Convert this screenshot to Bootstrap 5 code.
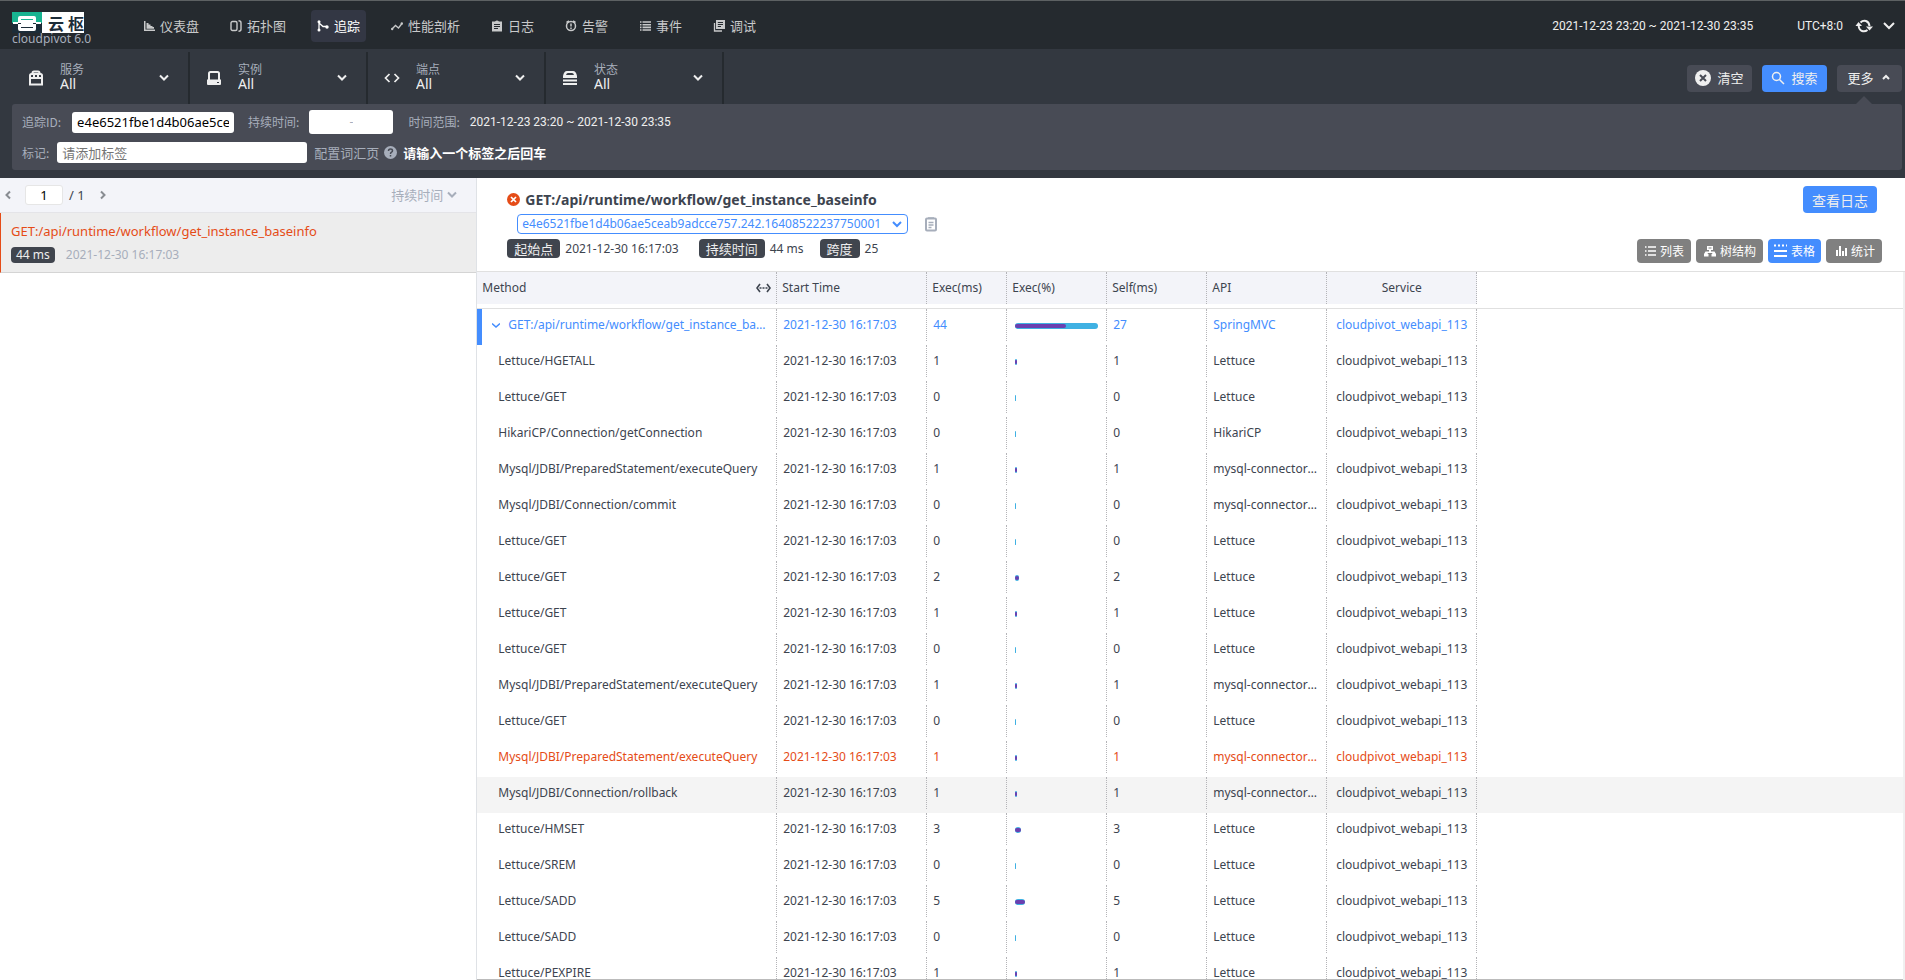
<!DOCTYPE html>
<html lang="zh-CN">
<head>
<meta charset="utf-8">
<meta name="viewport" content="width=device-width, initial-scale=1">
<title>cloudpivot 6.0</title>
<link href="https://cdn.jsdelivr.net/npm/bootstrap@5.3.0/dist/css/bootstrap.min.css" rel="stylesheet">
<style>
  :root { --ink:#3d444f; --dim:#a7aebb; --blue:#448dfe; --red:#e54c17; --bar:#333840; --dark:#252a2f; --panel:#484b55; --pale:#f3f4f9; }
  body { font-family:"Noto Sans","Noto Sans CJK SC",sans-serif; font-size:12px; line-height:16px; color:var(--ink); background:#fff; }
  svg { display:block; flex:none; fill:none; stroke:currentColor; }
  svg .f { fill:currentColor; stroke:none; }
  button, select, input { font:inherit; color:inherit; }
  select { appearance:none; border:0; background:transparent; padding:0; }
  input { border:0; border-radius:3px; background:#fff; color:#000; min-width:0; }
  .cjk { font-family:"Noto Sans CJK SC",sans-serif; }
  .t13 { font-size:13px; }
  .dates { font-family:Roboto,sans-serif; color:#efefef; }
  .dim { color:var(--dim); }
  .topbar { height:49px; background:var(--dark); border-top:1px solid #5d6163; padding:2px 9px 0 12px; }
  .brand { width:125px; padding-top:9px; }
  .brand-img { width:72px; height:21px; background:linear-gradient(#18b491 52%,#1c2c38 52%) left/30px 100% no-repeat #fff; }
  .brand-img b { font-size:16px; line-height:22px; color:#1c2c38; gap:4px; }
  .brand-sub { line-height:12px; color:var(--dim); }
  .menu { gap:19px; font-size:13px; }
  .menu a { height:32px; padding:0 6px; gap:5px; border-radius:4px; color:#c8c9ca; text-decoration:none; white-space:nowrap; }
  .menu a.active { background:#333744; color:#fff; }
  .filters { background:var(--bar); }
  .filter-row { height:55px; padding:3px 3px 0 12px; }
  .filter { width:178px; padding:0 18px 0 16px; border-right:2px solid var(--dark); color:#efefef; }
  .filter select { display:block; width:80px; font-size:14px; line-height:16px; height:16px; }
  .filter label { color:var(--dim); display:block; line-height:15px; }
  .filter-text { padding-bottom:4px; }
  .tool { height:27px; width:65px; border:0; border-radius:4px; background:var(--panel); color:#efefef; font-size:13px; gap:6px; padding:0; }
  .tool.go { background:var(--blue); }
  .advanced { background:var(--panel); border-radius:3px; margin:0 3px 0 12px; padding:6px 10px 7px; height:66px; color:var(--dim); position:relative; }
  .advanced::before { content:""; position:absolute; right:30px; top:-8px; border:8px solid transparent; border-top:0; border-bottom-color:var(--panel); }
  .duration { width:84px; height:24px; background:#fff; border-radius:3px; margin:0 15px 0 10px; }
  .duration input { width:32px; padding:0; text-align:center; }
  .field { height:21px; padding:0 5px; font-size:13px; }
  .field::placeholder { color:#757575; }
  .side { width:25%; border-right:1px solid #dfe2e6; box-sizing:content-box; }
  .pager { height:35px; background:var(--pale); border-bottom:1px solid #e4e4e8; padding:0 19px 0 4px; }
  .pager button, .plain { border:0; background:none; padding:0; }
  .pager button { color:#888c92; }
  .pager input { width:38px; height:20px; border:1px solid #e6e6e6; margin:0 6px 0 13px; text-align:center; padding:0; }
  .trace { height:60px; background:#ededed; border-left:1px solid var(--red); border-bottom:1px solid #d4d4d4; padding:8px 10px 0; }
  .trace a { color:var(--red); text-decoration:none; line-height:20px; }
  .tag { background:#40454e; color:#eee; border-radius:4px; padding:0 5px; }
  .tag.wide { font-size:13px; line-height:19px; padding:0 7px; margin-right:5px; }
  .dhead { height:94px; border-bottom:1px solid #e0e0e0; padding:8px 23px 0 30px; }
  .dhead h1 { font-size:14px; line-height:19px; }
  .trace-id { width:391px; height:20px; border:1px solid var(--blue); border-radius:4px; color:var(--blue); padding:0 4px; line-height:18px; background:url("data:image/svg+xml,%3Csvg xmlns='http://www.w3.org/2000/svg' width='10' height='8' fill='none' stroke='%23448dfe' stroke-width='2'%3E%3Cpath d='M1 2l4 4 4-4'/%3E%3C/svg%3E") right 5px center no-repeat; }
  .log-btn { height:27px; width:74px; border:0; border-radius:4px; background:var(--blue); color:#eee; font-size:14px; padding:0; margin-right:5px; }
  .view { height:24px; border:0; border-radius:4px; background:#808080; color:#fff; padding:0 7px 0 8px; gap:4px; white-space:nowrap; }
  .view.on { background:var(--blue); }
  .pane { border-bottom:1px solid #bbb; }
  .spans { table-layout:fixed; width:100%; border-collapse:separate; border-spacing:0; }
  .spans th, .spans td { padding:0; font-weight:400; }
  .spans th { padding-bottom:4px; border-bottom:1px solid #e0e0e0; }
  .spans td { padding-bottom:4px; }
  .cell { height:32px; line-height:32px; border-right:1px dotted #b4b4b8; padding:0 6px; overflow:hidden; white-space:nowrap; text-overflow:ellipsis; }
  th .cell { background:var(--pale); padding:0 5px; }
  td:first-child .cell { padding-left:21px; }
  .root { color:var(--blue); }
  .root td:first-child { box-shadow:inset 5px 0 var(--blue); }
  .root td:first-child .cell { padding-left:15px; display:flex; align-items:center; gap:8px; }
  .failed { color:var(--red); }
  .hovered { background:#f4f4f4; }
  .meter { height:6px; margin:14px 2px 0; }
  .meter i { display:block; height:6px; min-width:1px; border-radius:3px; background:#3fb1e3; padding:1px 0; }
  .meter b { display:block; height:4px; border-radius:2px; background:#6a40b0; }
  .rail { width:5px; background:#f0f0f0; padding:17px 0 0 2px; }
  .rail div { height:73.5%; background:#c1c1c1; }
</style>
</head>
<body>
<div class="vh-100 d-flex flex-column overflow-hidden">
  <header class="topbar d-flex align-items-center flex-shrink-0">
    <div class="brand align-self-start">
      <div class="brand-img d-flex">
        <svg width="36" height="21"><path class="f" style="fill:#fff" d="M8 4h14q2 0 2 2v4h5v2h-5v5q0 2-2 2H8q-2 0-2-2v-5H1v-2h5V6q0-2 2-2z"/><path d="M9 7.500h12" stroke="#18b491"/><path d="M6 11.500h3M21 11.500h3M9 15.500h12" stroke="#1c2c38"/></svg>
        <b class="cjk d-flex"><span>云</span><span>枢</span></b>
      </div>
      <div class="brand-sub">cloudpivot 6.0</div>
    </div>
    <nav class="menu d-flex cjk">
      <a href="#" class="d-flex align-items-center"><svg width="12" height="12"><path class="f" d="M1 1h1.500v8.500H12V11H1zM3.500 3h2v1.500h2V6h2v1h1.500v1.800H3.500z"/></svg>仪表盘</a>
      <a href="#" class="d-flex align-items-center"><svg width="12" height="12" stroke-width="1.400"><rect x="1" y="1.500" width="6" height="9" rx="1.500"/><path d="M8.500 .7q2.500 0 2.500 2v6.600q0 2-2.500 2"/></svg>拓扑图</a>
      <a href="#" class="active d-flex align-items-center"><svg width="12" height="12" stroke-width="1.300"><path d="M2 1v10M2 3l4 3.500h4"/><circle class="f" cx="2" cy="1.800" r="1.500"/><circle class="f" cx="2" cy="10" r="1.500"/><circle class="f" cx="10" cy="7" r="1.700"/></svg>追踪</a>
      <a href="#" class="d-flex align-items-center"><svg width="12" height="12" stroke-width="1.300"><path d="M1 9l3.500-3.500 3 2.500L11 3.500"/><circle class="f" cx="1.200" cy="9" r="1.200"/><circle class="f" cx="10.800" cy="3.500" r="1.200"/></svg>性能剖析</a>
      <a href="#" class="d-flex align-items-center"><svg width="12" height="12"><path class="f" fill-rule="evenodd" d="M1 1.500h3Q6-.500 8 1.500h3V11.500H1zM3 4v1h6V4zM3 6v1h6V6zM3 8v1h4V8z"/></svg>日志</a>
      <a href="#" class="d-flex align-items-center"><svg width="12" height="12" stroke-width="1.500"><circle cx="6" cy="6" r="4.500"/><path d="M6 3.500v3M6 7.500V9M4 1L1.500 2.500M8 1l2.500 1.500"/></svg>告警</a>
      <a href="#" class="d-flex align-items-center"><svg width="12" height="12" stroke-width="1.600"><path d="M1 2h1.500M3.500 2H12M1 4.700h1.500M3.500 4.700H12M1 7.400h1.500M3.500 7.400H12M1 10h1.500M3.500 10H12"/></svg>事件</a>
      <a href="#" class="d-flex align-items-center"><svg width="12" height="12"><path d="M1.500 3v8H9" stroke-width="1.300"/><path class="f" fill-rule="evenodd" d="M3 0h9v9H3zM4.800 2v1H10V2zM4.800 4v1H10V4zM4.800 6v1H8V6z"/></svg>调试</a>
    </nav>
    <div class="dates d-flex align-items-center ms-auto">
      <span style="margin-right:44px">2021-12-23 23:20 ~ 2021-12-30 23:35</span>
      <span>UTC+8:0</span>
      <button class="plain dates me-2" style="margin-left:11px" aria-label="刷新"><svg width="20" height="16" stroke-width="2"><path d="M6.500 4.500Q9 2 12 3q3 1 3.500 5M13.500 12Q11 14 8 13 5 12 4.500 7"/><path class="f" d="M1.500 8L4.500 4 8 8zM12 8.500h7l-3.500 4z"/></svg></button>
      <button class="plain dates" aria-label="展开"><svg width="14" height="10" stroke-width="2"><path d="M2 2l5 5 5-5"/></svg></button>
    </div>
  </header>

  <section class="filters pb-2 flex-shrink-0">
    <div class="filter-row d-flex">
      <div class="filter d-flex align-items-center">
        <svg width="16" height="16" class="me-3" stroke-width="2"><path d="M2 8h12v6.500H2zM2 8V5.500Q2 4 3.500 4h9Q14 4 14 5.500V8M4.500 5V3q0-1.500 1.500-1.500h4q1.500 0 1.500 1.500v2M6 5v2M10 5v2"/></svg>
        <div class="filter-text flex-grow-1"><label for="svc" class="cjk">服务</label><select id="svc"><option>All</option></select></div>
        <svg width="12" height="8" stroke-width="2"><path d="M2 1.500l4 4 4-4"/></svg>
      </div>
      <div class="filter d-flex align-items-center">
        <svg width="16" height="16" class="me-3" stroke-width="2"><path d="M3 10V3.500Q3 2 4.500 2h7Q13 2 13 3.500V10"/><path class="f" fill-rule="evenodd" d="M1 9.500h14v4.500q0 1-1 1H2q-1 0-1-1zM11 12v1h2v-1z"/></svg>
        <div class="filter-text flex-grow-1"><label for="ins" class="cjk">实例</label><select id="ins"><option>All</option></select></div>
        <svg width="12" height="8" stroke-width="2"><path d="M2 1.500l4 4 4-4"/></svg>
      </div>
      <div class="filter d-flex align-items-center">
        <svg width="16" height="16" class="me-3" stroke-width="1.700"><path d="M5.500 4L1.500 8l4 4M10.500 4l4 4-4 4"/></svg>
        <div class="filter-text flex-grow-1"><label for="ep" class="cjk">端点</label><select id="ep"><option>All</option></select></div>
        <svg width="12" height="8" stroke-width="2"><path d="M2 1.500l4 4 4-4"/></svg>
      </div>
      <div class="filter d-flex align-items-center">
        <svg width="16" height="16" class="me-3" stroke-width="2"><path d="M1 10.500h14M1 14h14"/><path class="f" fill-rule="evenodd" d="M1 8V6q1-5 4-5h6q3 0 4 5v2zM4 5h8q-.500-2-2-2H6Q4.500 3 4 5z"/></svg>
        <div class="filter-text flex-grow-1"><label for="st" class="cjk">状态</label><select id="st"><option>All</option></select></div>
        <svg width="12" height="8" stroke-width="2"><path d="M2 1.500l4 4 4-4"/></svg>
      </div>
      <div class="d-flex align-items-center ms-auto cjk" style="gap:10px">
        <button class="tool d-flex align-items-center justify-content-center"><svg width="16" height="16"><circle class="f" cx="8" cy="8" r="8"/><path d="M5 5l6 6M11 5l-6 6" stroke="#484b55" stroke-width="2"/></svg>清空</button>
        <button class="tool go d-flex align-items-center justify-content-center"><svg width="14" height="14" stroke-width="1.500"><circle cx="5.500" cy="5.500" r="4"/><path d="M8.500 8.500L13 13"/></svg>搜索</button>
        <button class="tool d-flex align-items-center justify-content-center">更多<svg width="12" height="8" stroke-width="2"><path d="M3 5l3-3 3 3"/></svg></button>
      </div>
    </div>
    <div class="advanced d-flex flex-column justify-content-between">
      <div class="d-flex align-items-center">
        <label for="tid" class="cjk">追踪ID:</label>
        <input id="tid" class="field" style="width:162px;margin:0 14px 0 11px" value="e4e6521fbe1d4b06ae5ceab9adcce757.242.16408522237750001">
        <label for="dmin" class="cjk">持续时间:</label>
        <div class="duration d-flex align-items-center justify-content-center"><input id="dmin" aria-label="最短"><span>-</span><input aria-label="最长"></div>
        <span class="cjk">时间范围:</span>
        <span class="dates" style="margin-left:10px">2021-12-23 23:20 ~ 2021-12-30 23:35</span>
      </div>
      <div class="d-flex align-items-center cjk">
        <label for="tags">标记:</label>
        <input id="tags" class="field ms-2" style="width:250px" placeholder="请添加标签">
        <a href="#" class="dim t13 text-decoration-none" style="margin:0 5px 0 7px">配置词汇页</a>
        <svg width="13" height="13"><circle class="f" cx="6.500" cy="6.500" r="6.500"/><path d="M4.500 5q0-2 2-2t2 1.700q0 1-1 1.500t-1 1.800M6.500 9v1.500" stroke="#484b55" stroke-width="1.500"/></svg>
        <b class="t13 text-white" style="margin-left:6px">请输入一个标签之后回车</b>
      </div>
    </div>
  </section>

  <main class="flex-grow-1 d-flex" style="min-height:0">
    <aside class="side flex-shrink-0">
      <div class="pager d-flex align-items-center t13">
        <button aria-label="上一页"><svg width="8" height="10" stroke-width="2"><path d="M6 1.500L2.500 5 6 8.500"/></svg></button>
        <input aria-label="页码" value="1"><span>/ 1</span>
        <button aria-label="下一页" style="margin-left:14px"><svg width="8" height="10" stroke-width="2"><path d="M2 1.500L5.500 5 2 8.500"/></svg></button>
        <div class="ms-auto d-flex align-items-center dim cjk">
          <select aria-label="排序"><option>持续时间</option></select>
          <svg width="10" height="8" style="margin-left:3px" stroke-width="2"><path d="M1 1.500l4 4 4-4"/></svg>
        </div>
      </div>
      <div class="trace">
        <a href="#" class="t13 d-block">GET:/api/runtime/workflow/get_instance_baseinfo</a>
        <div class="d-flex" style="margin-top:6px"><span class="tag">44 ms</span><span class="dim" style="margin-left:11px">2021-12-30 16:17:03</span></div>
      </div>
    </aside>

    <section class="flex-grow-1 d-flex flex-column" style="min-width:0">
      <div class="dhead d-flex justify-content-between flex-shrink-0">
        <div>
          <div class="d-flex align-items-center" style="gap:5px">
            <svg width="13" height="13"><circle class="f" cx="6.500" cy="6.500" r="6.500" style="fill:#e54c17"/><path d="M4 4l5 5M9 4l-5 5" stroke="#fff" stroke-width="1.700"/></svg>
            <h1 class="fw-bold m-0 py-1">GET:/api/runtime/workflow/get_instance_baseinfo</h1>
          </div>
          <div class="d-flex align-items-center" style="margin:1px 0 5px 10px">
            <select class="trace-id" aria-label="追踪ID"><option>e4e6521fbe1d4b06ae5ceab9adcce757.242.16408522237750001</option></select>
            <button class="plain dim ms-3" aria-label="复制"><svg width="14" height="16" stroke="#a7aebb" stroke-width="2"><rect x="2" y="2.500" width="10" height="12" rx="1"/><path d="M4 2h6M4.500 6.500h5M4.500 9h5M4.500 11.500h3" stroke-width="1.400"/></svg></button>
          </div>
          <div class="d-flex align-items-center">
            <span class="tag wide cjk">起始点</span><span>2021-12-30 16:17:03</span>
            <span class="tag wide cjk" style="margin-left:20px">持续时间</span><span>44 ms</span>
            <span class="tag wide cjk ms-3">跨度</span><span>25</span>
          </div>
        </div>
        <div class="d-flex flex-column align-items-end justify-content-between cjk" style="padding-bottom:8px">
          <button class="log-btn">查看日志</button>
          <div class="d-flex" style="gap:5px">
            <button class="view d-flex align-items-center"><svg width="11" height="12" stroke-width="1.300"><path d="M0 2h1.500M3 2h8M0 6h1.500M3 6h8M0 10h1.500M3 10h8"/></svg>列表</button>
            <button class="view d-flex align-items-center"><svg width="12" height="12"><path class="f" fill-rule="evenodd" d="M3 1h6v4H7v1.500h3.500L12 9v2.500H7.500V9h1L8 8H4l-.500 1h1v2.500H0V9l1.500-2.500H5V5H3zM4.500 2.500v1h3v-1z"/></svg>树结构</button>
            <button class="view on d-flex align-items-center" style="padding:0 6px"><svg width="13" height="14" stroke-width="2"><path d="M0 1.500h13" stroke-dasharray="2 2"/><path d="M0 7h13M0 12h13"/></svg>表格</button>
            <button class="view d-flex align-items-center"><svg width="13" height="12" stroke-width="2"><path d="M3 11V5M6 11V1M9 11V6M12 11V3"/></svg><span>统计</span></button>
          </div>
        </div>
      </div>
      <div class="flex-grow-1 d-flex" style="min-height:0">
        <div class="pane flex-grow-1 overflow-hidden">
          <table class="spans">
            <colgroup><col style="width:300px"><col style="width:150px"><col style="width:80px"><col style="width:100px"><col style="width:100px"><col style="width:120px"><col style="width:150px"><col></colgroup>
            <thead><tr>
              <th><div class="cell d-flex align-items-center justify-content-between">Method<svg width="15" height="10" stroke-width="1.600"><path d="M4 1L1 5l3 4M11 1l3 4-3 4"/><path d="M3.500 5h8" stroke-dasharray="2 1"/></svg></div></th>
              <th><div class="cell">Start Time</div></th><th><div class="cell">Exec(ms)</div></th><th><div class="cell">Exec(%)</div></th>
              <th><div class="cell">Self(ms)</div></th><th><div class="cell">API</div></th><th><div class="cell text-center">Service</div></th><th></th>
            </tr></thead>
            <tbody id="rows"></tbody>
          </table>
        </div>
        <div class="rail"><div></div></div>
      </div>
    </section>
  </main>
</div>
<script>
  const Q = 'Mysql/JDBI/PreparedStatement/executeQuery', M = 'mysql-connector-java', L = 'Lettuce';
  // method, exec ms, self ms, api, row state
  const spans = [
    ['GET:/api/runtime/workflow/get_instance_baseinfo', 44, 27, 'SpringMVC', 'root'],
    ['Lettuce/HGETALL', 1, 1, L], ['Lettuce/GET', 0, 0, L], ['HikariCP/Connection/getConnection', 0, 0, 'HikariCP'],
    [Q, 1, 1, M], ['Mysql/JDBI/Connection/commit', 0, 0, M], ['Lettuce/GET', 0, 0, L], ['Lettuce/GET', 2, 2, L],
    ['Lettuce/GET', 1, 1, L], ['Lettuce/GET', 0, 0, L], [Q, 1, 1, M], ['Lettuce/GET', 0, 0, L], [Q, 1, 1, M, 'failed'],
    ['Mysql/JDBI/Connection/rollback', 1, 1, M, 'hovered'], ['Lettuce/HMSET', 3, 3, L], ['Lettuce/SREM', 0, 0, L],
    ['Lettuce/SADD', 5, 5, L], ['Lettuce/SADD', 0, 0, L], ['Lettuce/PEXPIRE', 1, 1, L]
  ];
  const chevron = '<svg width="8" height="8" stroke-width="1.600"><path d="M0 2.500L4 6l4-3.500"/></svg>';
  document.getElementById('rows').innerHTML = spans.map(([m, e, s, api, state = '']) => `<tr class="${state}">
    <td><div class="cell">${state === 'root' ? chevron : ''}<span class="${state === 'root' ? 'text-truncate' : ''}">${m}</span></div></td>
    <td><div class="cell">2021-12-30 16:17:03</div></td><td><div class="cell">${e}</div></td>
    <td><div class="cell"><div class="meter"><i style="width:${e / 44 * 100}%"><b style="width:${e ? s / e * 100 : 0}%"></b></i></div></div></td>
    <td><div class="cell">${s}</div></td><td><div class="cell">${api}</div></td>
    <td><div class="cell text-center">cloudpivot_webapi_113</div></td><td></td></tr>`).join('');
</script>
<script src="https://cdn.jsdelivr.net/npm/bootstrap@5.3.0/dist/js/bootstrap.bundle.min.js"></script>
</body>
</html>
